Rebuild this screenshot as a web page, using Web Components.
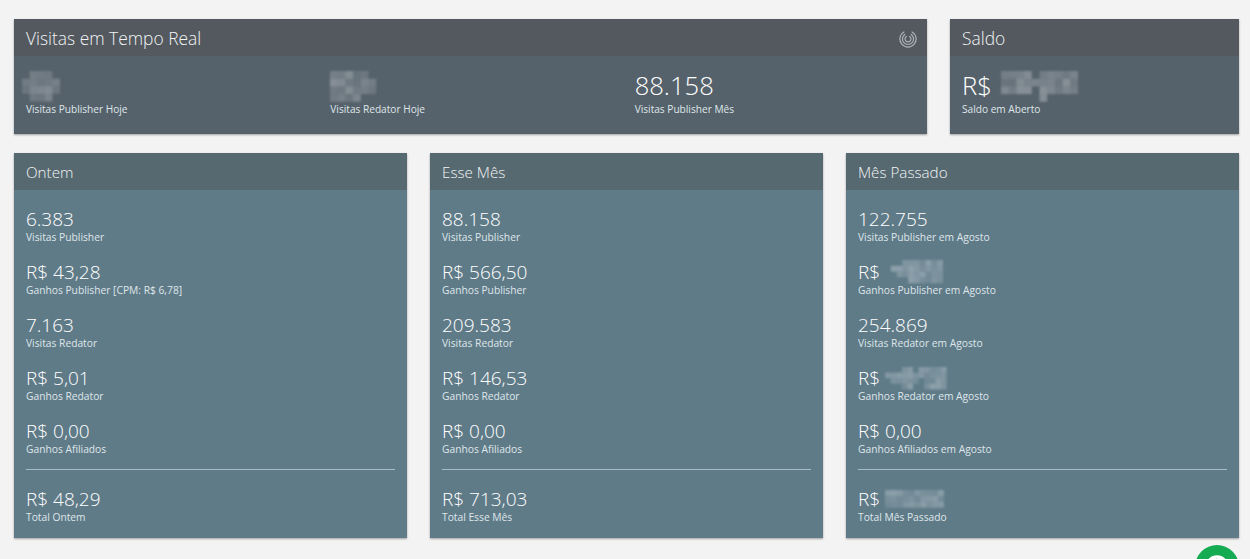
<!DOCTYPE html>
<html lang="pt-BR">
<head>
<meta charset="utf-8">
<title>Painel</title>
<style>
  html, body { margin: 0; height: 100%; overflow: hidden; }
  body { background: #f3f3f3; font-family: "Open Sans", sans-serif; color: #fff; }
</style>
</head>
<body>
<dash-board>
  <stat-card slot="top" heading="Visitas em Tempo Real" tone="dark" columns spinner>
    <stat-item big label="Visitas Publisher Hoje"><pixel-blur style="margin:2px 0 0 -4px" cols="5" rows="4" cell="7.6" seed="3" mask="01110,11111,11111,01110"></pixel-blur></stat-item>
    <stat-item big label="Visitas Redator Hoje"><pixel-blur style="margin-top:2px" cols="6" rows="4" cell="7.7" seed="7" mask="111110,111111,111111,111100"></pixel-blur></stat-item>
    <stat-item big value="88.158" label="Visitas Publisher Mês"></stat-item>
  </stat-card>
  <stat-card slot="top" heading="Saldo" tone="dark">
    <stat-item big value="R$" label="Saldo em Aberto"><pixel-blur style="margin-top:2px" cols="10" rows="4" cell="7.7" seed="11" mask="1111011111,1111111111,1111011111,0000010000"></pixel-blur></stat-item>
  </stat-card>

  <stat-card slot="bottom" heading="Ontem" tone="blue">
    <stat-item value="6.383" label="Visitas Publisher"></stat-item>
    <stat-item value="R$ 43,28" label="Ganhos Publisher [CPM: R$ 6,78]"></stat-item>
    <stat-item value="7.163" label="Visitas Redator"></stat-item>
    <stat-item value="R$ 5,01" label="Ganhos Redator"></stat-item>
    <stat-item value="R$ 0,00" label="Ganhos Afiliados"></stat-item>
    <stat-item total value="R$ 48,29" label="Total Ontem"></stat-item>
  </stat-card>
  <stat-card slot="bottom" heading="Esse Mês" tone="blue">
    <stat-item value="88.158" label="Visitas Publisher"></stat-item>
    <stat-item value="R$ 566,50" label="Ganhos Publisher"></stat-item>
    <stat-item value="209.583" label="Visitas Redator"></stat-item>
    <stat-item value="R$ 146,53" label="Ganhos Redator"></stat-item>
    <stat-item value="R$ 0,00" label="Ganhos Afiliados"></stat-item>
    <stat-item total value="R$ 713,03" label="Total Esse Mês"></stat-item>
  </stat-card>
  <stat-card slot="bottom" heading="Mês Passado" tone="blue">
    <stat-item value="122.755" label="Visitas Publisher em Agosto"></stat-item>
    <stat-item value="R$" label="Ganhos Publisher em Agosto"><pixel-blur cols="10" rows="4" cell="5.8" seed="5" mask="0001111111,0111111111,0011111111,0000111111"></pixel-blur></stat-item>
    <stat-item value="254.869" label="Visitas Redator em Agosto"></stat-item>
    <stat-item value="R$" label="Ganhos Redator em Agosto"><pixel-blur cols="11" rows="4" cell="5.6" seed="9" mask="00011011111,11111111111,01111101111,00011001111"></pixel-blur></stat-item>
    <stat-item value="R$ 0,00" label="Ganhos Afiliados em Agosto"></stat-item>
    <stat-item total value="R$" label="Total Mês Passado"><pixel-blur cols="10" rows="3" cell="5.9" seed="13" mask="1111111111,1111111111,1111111111"></pixel-blur></stat-item>
  </stat-card>
</dash-board>
<chat-button></chat-button>

<script>
class DashBoard extends HTMLElement {
  constructor() {
    super();
    this.attachShadow({ mode: "open" });
  }

  connectedCallback() {
    this.shadowRoot.innerHTML = `
    <style>
      :host { display: block; padding: 19px 11px 0 14px; }
      .top { display: grid; grid-template-columns: 913px 289px; gap: 23px; }
      .bottom { display: grid; grid-template-columns: repeat(3, 393px); gap: 23px; margin-top: 19px; }
    </style>
    <div class="top"><slot name="top"></slot></div>
    <div class="bottom"><slot name="bottom"></slot></div>
    `;
  }
}

class StatCard extends HTMLElement {
  constructor() {
    super();
    this.attachShadow({ mode: "open" });
  }

  spinner() {
    if (!this.hasAttribute("spinner")) return "";
    return `
      <svg class="spin" viewBox="0 0 20 20" width="18" height="18" fill="none" stroke="#aeb3b6" stroke-linecap="round">
        <path d="M5.5 2.2A9 9 0 1 0 14.5 2.2" stroke-width="1.3"/>
        <path d="M6.4 4.9A6.2 6.2 0 1 0 13.6 4.9" stroke-width="1.3"/>
        <path d="M8.2 7.2A3.3 3.3 0 1 0 11.8 7.2" stroke-width="1.3"/>
      </svg>`;
  }

  connectedCallback() {
    const dark = this.getAttribute("tone") === "dark";
    this.shadowRoot.innerHTML = `
    <style>
      :host {
        display: flex; flex-direction: column;
        background: ${dark ? "#56626b" : "#5f7b88"};
        box-shadow: 0 1px 2px rgba(0,0,0,0.35);
      }
      header {
        height: 37px; box-sizing: border-box; padding: 0 12px;
        display: flex; align-items: center; justify-content: space-between;
        background: ${dark ? "#53595f" : "#566870"};
        font-weight: 300; font-size: ${dark ? "17.4px" : "15.2px"};
        color: #f2f4f5;
      }
      .spin { margin: 3px -2px 0 0; }
      .body {
        padding: ${dark ? "16px 12px 0" : "18px 12px 0"};
        box-sizing: border-box;
        height: ${dark ? "78px" : "348px"};
        ${this.hasAttribute("columns") ? "display: grid; grid-template-columns: repeat(3, 304.33px);" : ""}
      }
    </style>
    <header><span>${this.getAttribute("heading")}</span>${this.spinner()}</header>
    <div class="body"><slot></slot></div>
    `;
  }
}

class StatItem extends HTMLElement {
  constructor() {
    super();
    this.attachShadow({ mode: "open" });
  }

  connectedCallback() {
    const big = this.hasAttribute("big");
    const total = this.hasAttribute("total");
    const value = this.getAttribute("value") ?? "";
    this.shadowRoot.innerHTML = `
    <style>
      :host {
        display: block;
        height: ${big ? "auto" : "53px"};
        ${total ? "border-top: 1px solid #a9bcc6; margin-top: -4px; padding-top: 18px;" : ""}
      }
      .value {
        display: flex; align-items: center; gap: ${big ? "9px" : "5px"};
        font-weight: 300; color: #fff;
        font-size: ${big ? "25.6px" : "19px"};
        height: ${big ? "27px" : "22px"};
        line-height: ${big ? "27px" : "22px"};
      }
      .label {
        font-size: ${big ? "10.15px" : "10.25px"};
        line-height: 14px;
        margin-top: ${big ? "3px" : "0"};
        color: #dfe6ea;
      }
    </style>
    <div class="value">${value ? `<span>${value}</span>` : ""}<slot></slot></div>
    <div class="label">${this.getAttribute("label")}</div>
    `;
  }
}

// censored numbers in the screenshot, drawn as a mosaic of soft squares
class PixelBlur extends HTMLElement {
  constructor() {
    super();
    this.attachShadow({ mode: "open" });
  }

  connectedCallback() {
    const cols = Number(this.getAttribute("cols"));
    const rows = Number(this.getAttribute("rows"));
    const cell = Number(this.getAttribute("cell"));
    const mask = this.getAttribute("mask").split(",");
    let seed = Number(this.getAttribute("seed"));
    let rects = "";
    for (let y = 0; y < rows; y++) {
      for (let x = 0; x < cols; x++) {
        seed = (seed * 73 + 41) % 101;
        if (mask[y][x] !== "1") continue;
        const op = 0.14 + (seed / 101) * 0.22;
        rects += `<rect x="${x * cell}" y="${y * cell}" width="${cell}" height="${cell}" fill="#dfe3e8" fill-opacity="${op.toFixed(2)}"/>`;
      }
    }
    this.shadowRoot.innerHTML = `
    <style>
      :host { display: inline-block; line-height: 0; }
      svg { display: block; filter: blur(1px); overflow: visible; }
    </style>
    <svg width="${cols * cell}" height="${rows * cell}">${rects}</svg>
    `;
  }
}

class ChatButton extends HTMLElement {
  constructor() {
    super();
    this.attachShadow({ mode: "open" });
  }

  connectedCallback() {
    this.shadowRoot.innerHTML = `
    <style>
      :host {
        position: fixed; left: 1195px; top: 545px;
        width: 44px; height: 44px; border-radius: 50%;
        background: #14ab53;
        display: flex; align-items: center; justify-content: center;
      }
    </style>
    <svg width="26" height="26" viewBox="0 0 26 26" fill="none" stroke="#fff" stroke-width="3.4"><circle cx="13" cy="13" r="10"/></svg>
    `;
  }
}

customElements.define("dash-board", DashBoard);
customElements.define("stat-card", StatCard);
customElements.define("stat-item", StatItem);
customElements.define("pixel-blur", PixelBlur);
customElements.define("chat-button", ChatButton);
</script>
</body>
</html>
